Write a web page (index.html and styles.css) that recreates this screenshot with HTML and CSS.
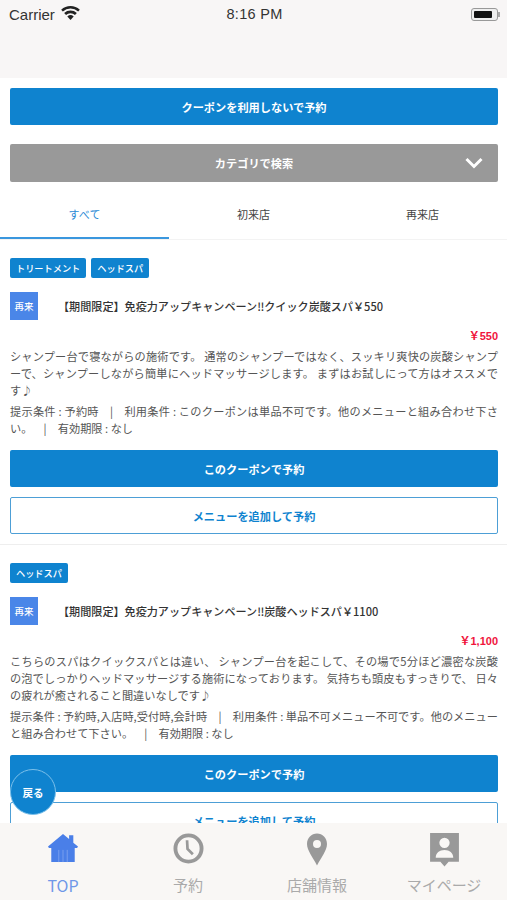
FILE: index.html
```html
<!DOCTYPE html>
<html lang="ja">
<head>
    <meta charset="UTF-8">
    <meta name="viewport" content="width=device-width, initial-scale=1.0">
    <title>クーポン</title>
    <link rel="stylesheet" href="styles.css">
</head>
<body>
    <div class="screen">
        <div class="header">
            <div class="status-bar">
                <div class="status-left">
                    <span>Carrier</span>
                    <svg class="wifi" width="19" height="14" viewBox="0 0 20 15">
                        <path d="M10 15 6.600 11.200a5 5 0 0 1 6.800 0z" fill="#222"/>
                        <path d="M5.200 9.700 3.200 7.400a10 10 0 0 1 13.600 0l-2 2.300a7 7 0 0 0-9.600 0z" fill="#222"/>
                        <path d="M1.800 5.900 0 3.900a15 15 0 0 1 20 0l-1.800 2a12.300 12.300 0 0 0-16.400 0z" fill="#222"/>
                    </svg>
                </div>
                <div class="status-time">8:16 PM</div>
                <div class="status-right">
                    <div class="battery"><div class="battery-level"></div></div>
                    <div class="battery-nub"></div>
                </div>
            </div>
        </div>

        <div class="content">
            <div class="top-actions">
                <a class="btn btn-primary">クーポンを利用しないで予約</a>
                <a class="btn btn-gray">カテゴリで検索
                    <svg class="chevron" width="18" height="12" viewBox="0 0 18 12">
                        <path d="M1.500 2 9 9.500 16.500 2" fill="none" stroke="#fff" stroke-width="3"/>
                    </svg>
                </a>
            </div>

            <div class="tabs">
                <div class="tab active">すべて</div>
                <div class="tab">初来店</div>
                <div class="tab">再来店</div>
            </div>

            <div class="coupon">
                <div class="tags">
                    <span class="tag">トリートメント</span>
                    <span class="tag">ヘッドスパ</span>
                </div>
                <div class="coupon-head">
                    <div class="visit-badge">再来</div>
                    <div class="coupon-title">【期間限定】免疫力アップキャンペーン‼クイック炭酸スパ￥550</div>
                </div>
                <div class="price">￥550</div>
                <p class="desc">シャンプー台で寝ながらの施術です。 通常のシャンプーではなく、スッキリ爽快の炭酸シャンプーで、シャンプーしながら簡単にヘッドマッサージします。 まずはお試しにって方はオススメです♪</p>
                <p class="terms">提示条件 : 予約時&emsp;|&emsp;利用条件 : このクーポンは単品不可です。他のメニューと組み合わせ下さい。&emsp;|&emsp;有効期限 : なし</p>
                <a class="btn btn-primary">このクーポンで予約</a>
                <a class="btn btn-outline">メニューを追加して予約</a>
            </div>

            <div class="coupon">
                <div class="tags">
                    <span class="tag">ヘッドスパ</span>
                </div>
                <div class="coupon-head">
                    <div class="visit-badge">再来</div>
                    <div class="coupon-title">【期間限定】免疫力アップキャンペーン‼炭酸ヘッドスパ￥1100</div>
                </div>
                <div class="price">￥1,100</div>
                <p class="desc">こちらのスパはクイックスパとは違い、 シャンプー台を起こして、その場で5分ほど濃密な炭酸の泡でしっかりヘッドマッサージする施術になっております。 気持ちも頭皮もすっきりで、 日々の疲れが癒されること間違いなしです♪</p>
                <p class="terms">提示条件 : 予約時,入店時,受付時,会計時&emsp;|&emsp;利用条件 : 単品不可メニュー不可です。他のメニューと組み合わせて下さい。&emsp;|&emsp;有効期限 : なし</p>
                <a class="btn btn-primary">このクーポンで予約</a>
                <a class="btn btn-outline">メニューを追加して予約</a>
            </div>
        </div>

        <a class="back-btn">戻る</a>

        <div class="tabbar">
            <div class="tabbar-item current">
                <div class="tabbar-icon">
                    <svg width="30" height="30" viewBox="0 0 32 32">
                        <path d="M16 1 22.500 6.500V2.500H27V10.300L32 14.500 31 16H28.500V31H3.500V16H1L0 14.500z" fill="#4a7fe8"/>
                        <path d="M11.500 18v13M16 18v13M20.500 18v13" stroke="#7ba0ee" stroke-width="1"/>
                    </svg>
                </div>
                <span>TOP</span>
            </div>
            <div class="tabbar-item">
                <div class="tabbar-icon">
                    <svg width="31" height="31" viewBox="0 0 32 32">
                        <circle cx="16" cy="16" r="13.500" fill="none" stroke="#999" stroke-width="4"/>
                        <path d="M14.500 7.500 15 16.500 20.500 22" fill="none" stroke="#999" stroke-width="2.800"/>
                    </svg>
                </div>
                <span>予約</span>
            </div>
            <div class="tabbar-item">
                <div class="tabbar-icon">
                    <svg width="20" height="33" viewBox="6 0 20 32">
                        <path fill-rule="evenodd" d="M16 0C10.500 0 6 4.500 6 10.500 6 17 12 24 16 32 20 24 26 17 26 10.500 26 4.500 21.500 0 16 0zM16 6.500A4 4 0 1 1 16 14.500 4 4 0 1 1 16 6.500z" fill="#999"/>
                    </svg>
                </div>
                <span>店舗情報</span>
            </div>
            <div class="tabbar-item">
                <div class="tabbar-icon">
                    <svg width="29" height="34" viewBox="2 1 28 33">
                        <path fill-rule="evenodd" d="M2 1H30V29H20L16 33.500 12 29H2zM16 5.500A5 5 0 1 0 16 15.500 5 5 0 1 0 16 5.500zM7.500 25H24.500C24.500 20.500 21 17.500 16 17.500S7.500 20.500 7.500 25z" fill="#999"/>
                    </svg>
                </div>
                <span>マイページ</span>
            </div>
        </div>
    </div>
</body>
</html>
```

FILE: styles.css
```css
* {
    box-sizing: border-box;
}

body {
    margin: 0;
    padding: 0;
    background-color: #fff;
    font-family: "Noto Sans CJK JP", "Liberation Sans", sans-serif;
    color: #444;
}

.screen {
    position: relative;
    width: 507px;
    height: 900px;
    overflow: hidden;
}

.header {
    height: 78px;
    background-color: #f8f6f6;
}

.status-bar {
    display: flex;
    justify-content: space-between;
    align-items: center;
    height: 28px;
    padding: 0 7px 0 9px;
    font-family: "Liberation Sans", sans-serif;
    font-size: 15px;
    color: #333;
}

.status-left,
.status-right {
    display: flex;
    align-items: center;
    width: 100px;
}

.status-left {
    gap: 6px;
}

.status-right {
    justify-content: flex-end;
}

.status-time {
    font-size: 14.500px;
    letter-spacing: 0.300px;
}

.wifi {
    margin-top: -3px;
}

.battery {
    width: 27px;
    height: 13px;
    padding: 2px;
    border: 1px solid #999;
    border-radius: 3px;
    background-color: #eee;
}

.battery-level {
    width: 18px;
    height: 100%;
    background-color: #111;
    border-radius: 1px;
}

.battery-nub {
    width: 2px;
    height: 5px;
    background-color: #aaa;
}

.top-actions {
    display: flex;
    flex-direction: column;
    gap: 19px;
    padding: 10px 9px 0 10px;
}

.btn {
    position: relative;
    display: flex;
    justify-content: center;
    align-items: center;
    height: 37px;
    border-radius: 2px;
    font-size: 11.200px;
    font-weight: 700;
    color: #fff;
}

.btn-primary {
    background-color: #0f83cf;
}

.btn-gray {
    height: 38px;
    background-color: #999;
}

.btn-outline {
    margin-top: 10px;
    background-color: #fff;
    border: 1px solid #4d9fd6;
    color: #0f83cf;
}

.chevron {
    position: absolute;
    right: 15px;
    top: 13px;
}

.tabs {
    display: flex;
    height: 58px;
    padding-top: 9px;
    border-bottom: 1px solid #f3f3f3;
}

.tab {
    flex: 1;
    display: flex;
    justify-content: center;
    align-items: center;
    border-bottom: 2px solid transparent;
    font-size: 11px;
    color: #444;
}

.active {
    color: #2a8ad6;
    border-bottom-color: #3a97de;
}

.coupon {
    padding: 18px 9px 10px 10px;
    border-bottom: 1px solid #eee;
}

.tags {
    display: flex;
    gap: 5px;
}

.tag {
    display: flex;
    align-items: center;
    height: 20px;
    padding: 0 6px;
    border-radius: 2px;
    background-color: #0f83cf;
    font-size: 9.200px;
    font-weight: 500;
    color: #fff;
}

.coupon-head {
    display: flex;
    align-items: center;
    gap: 20px;
    margin-top: 14px;
}

.visit-badge {
    display: flex;
    justify-content: center;
    align-items: center;
    width: 28px;
    height: 28px;
    background-color: #4a86e8;
    font-size: 9.500px;
    font-weight: 500;
    color: #fff;
}

.coupon-title {
    font-size: 11.100px;
    font-weight: 500;
    color: #333;
    margin-top: -1px;
}

.price {
    margin-top: 8px;
    height: 17px;
    line-height: 17px;
    text-align: right;
    font-family: "Liberation Sans", "Noto Sans CJK JP", sans-serif;
    font-size: 11px;
    font-weight: 700;
    color: #f0143c;
}

.desc,
.terms {
    margin: 0;
    font-size: 11.200px;
    line-height: 17px;
    color: #555;
    text-align: justify;
}

.desc {
    margin-top: 3px;
}

.terms {
    margin-top: 4px;
    margin-bottom: 13px;
}

.back-btn {
    position: absolute;
    left: 10px;
    top: 769px;
    display: flex;
    justify-content: center;
    align-items: center;
    width: 46px;
    height: 46px;
    border: 1px solid #7cc0ea;
    border-radius: 50%;
    background-color: #0f83cf;
    font-size: 10.500px;
    font-weight: 700;
    color: #fff;
}

.tabbar {
    position: absolute;
    left: 0;
    bottom: 0;
    display: grid;
    grid-template-columns: 126px 124px 134px 120px;
    width: 507px;
    height: 77px;
    padding-top: 10px;
    background-color: #f9f7f5;
}

.tabbar-item {
    display: flex;
    flex-direction: column;
    align-items: center;
    font-size: 15px;
    line-height: 20px;
    color: #aaa;
}

.tabbar-icon {
    height: 33px;
    margin-bottom: 9px;
}

.tabbar-icon svg {
    display: block;
}

.current {
    color: #6f97e8;
    font-size: 16px;
}
```
